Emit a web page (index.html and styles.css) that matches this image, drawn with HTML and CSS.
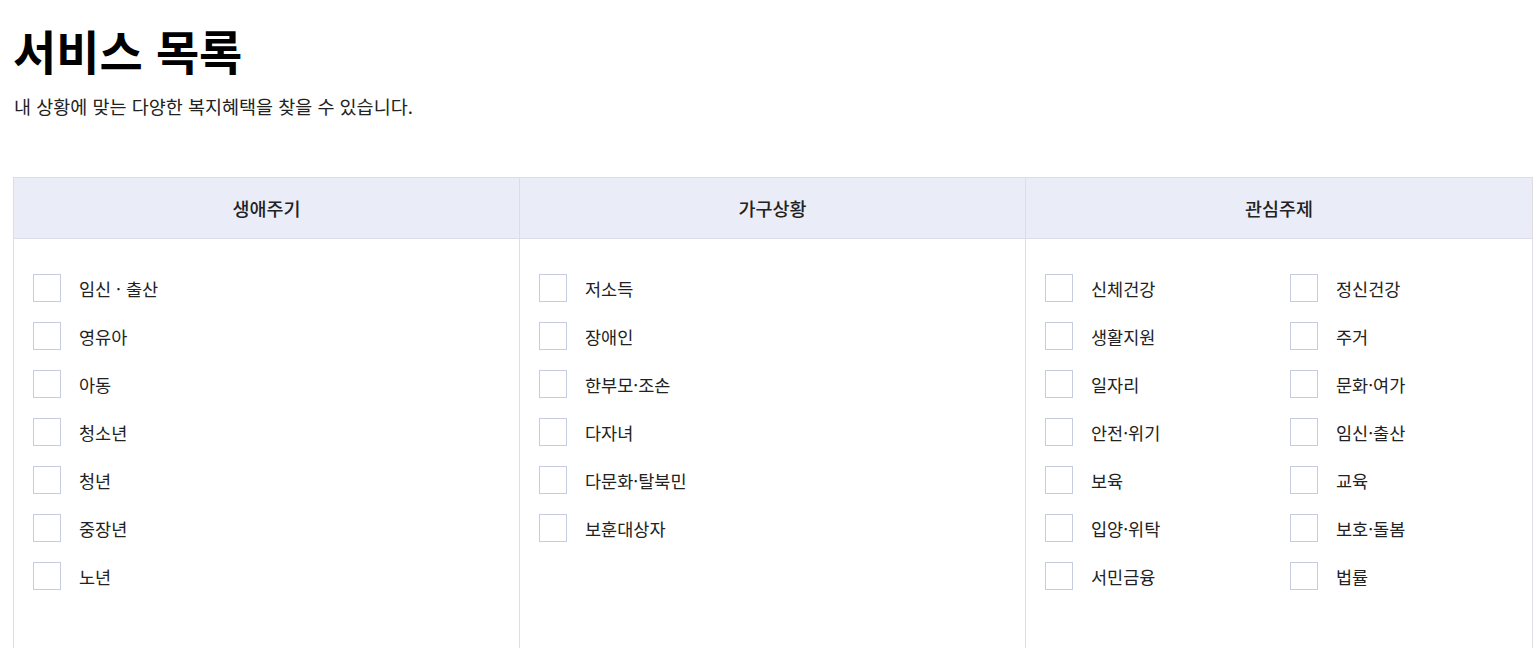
FILE: index.html
```html
<!DOCTYPE html>
<html lang="ko">
<head>
<meta charset="utf-8">
<title>서비스 목록</title>
<link rel="stylesheet" href="styles.css">
</head>
<body>
<div class="page">
  <h1 class="title">서비스 목록</h1>
  <p class="desc">내 상황에 맞는 다양한 복지혜택을 찾을 수 있습니다.</p>

  <div class="table">
    <div class="col">
      <div class="head">생애주기</div>
      <div class="body">
        <ul class="list">
          <li class="item"><span class="box"></span><span class="label">임신 · 출산</span></li>
          <li class="item"><span class="box"></span><span class="label">영유아</span></li>
          <li class="item"><span class="box"></span><span class="label">아동</span></li>
          <li class="item"><span class="box"></span><span class="label">청소년</span></li>
          <li class="item"><span class="box"></span><span class="label">청년</span></li>
          <li class="item"><span class="box"></span><span class="label">중장년</span></li>
          <li class="item"><span class="box"></span><span class="label">노년</span></li>
        </ul>
      </div>
    </div>
    <div class="col">
      <div class="head">가구상황</div>
      <div class="body">
        <ul class="list">
          <li class="item"><span class="box"></span><span class="label">저소득</span></li>
          <li class="item"><span class="box"></span><span class="label">장애인</span></li>
          <li class="item"><span class="box"></span><span class="label">한부모·조손</span></li>
          <li class="item"><span class="box"></span><span class="label">다자녀</span></li>
          <li class="item"><span class="box"></span><span class="label">다문화·탈북민</span></li>
          <li class="item"><span class="box"></span><span class="label">보훈대상자</span></li>
        </ul>
      </div>
    </div>
    <div class="col">
      <div class="head">관심주제</div>
      <div class="body">
        <ul class="list two">
          <li class="item"><span class="box"></span><span class="label">신체건강</span></li>
          <li class="item"><span class="box"></span><span class="label">정신건강</span></li>
          <li class="item"><span class="box"></span><span class="label">생활지원</span></li>
          <li class="item"><span class="box"></span><span class="label">주거</span></li>
          <li class="item"><span class="box"></span><span class="label">일자리</span></li>
          <li class="item"><span class="box"></span><span class="label">문화·여가</span></li>
          <li class="item"><span class="box"></span><span class="label">안전·위기</span></li>
          <li class="item"><span class="box"></span><span class="label">임신·출산</span></li>
          <li class="item"><span class="box"></span><span class="label">보육</span></li>
          <li class="item"><span class="box"></span><span class="label">교육</span></li>
          <li class="item"><span class="box"></span><span class="label">입양·위탁</span></li>
          <li class="item"><span class="box"></span><span class="label">보호·돌봄</span></li>
          <li class="item"><span class="box"></span><span class="label">서민금융</span></li>
          <li class="item"><span class="box"></span><span class="label">법률</span></li>
        </ul>
      </div>
    </div>
  </div>
</div>
</body>
</html>
```

FILE: styles.css
```css
* { box-sizing: border-box; }
html, body { margin: 0; padding: 0; background: #fff; }
body {
  font-family: "Noto Sans CJK KR", "Noto Sans", sans-serif;
  color: #111;
}
.page {
  padding: 16px 5px 0 13px;
}
.title {
  margin: 0;
  font-size: 47px;
  font-weight: 700;
  line-height: 68px;
  letter-spacing: 0;
  color: #000;
}
.desc {
  margin: 8px 0 0 1px;
  font-size: 18.5px;
  line-height: 28px;
  letter-spacing: 0;
  color: #222;
}
.table {
  margin-top: 57px;
  display: grid;
  grid-template-columns: 506px 506px 1fr;
  border: 1px solid #dcdde5;
  border-right: none;
  width: 1520px;
  height: 480px;
}
.col {
  border-right: 1px solid #dcdde5;
  display: flex;
  flex-direction: column;
}
.head {
  height: 61px;
  background: #eaedf8;
  border-bottom: 1px solid #dcdde5;
  display: flex;
  align-items: center;
  justify-content: center;
  font-size: 18.5px;
  font-weight: 500;
  letter-spacing: 0;
  color: #222;
}
.body {
  padding: 35px 19px 0 19px;
}
.list {
  list-style: none;
  margin: 0;
  padding: 0;
  display: grid;
  grid-template-columns: 1fr;
  row-gap: 20px;
}
.list.two {
  grid-template-columns: 1fr 1fr;
  column-gap: 22px;
}
.item {
  display: flex;
  align-items: center;
  height: 28px;
}
.box {
  width: 28px;
  height: 28px;
  border: 1px solid #c6cbe0;
  background: #fff;
  flex: none;
}
.label {
  margin-left: 18px;
  font-size: 17.5px;
  letter-spacing: 0;
  color: #222;
}
```
